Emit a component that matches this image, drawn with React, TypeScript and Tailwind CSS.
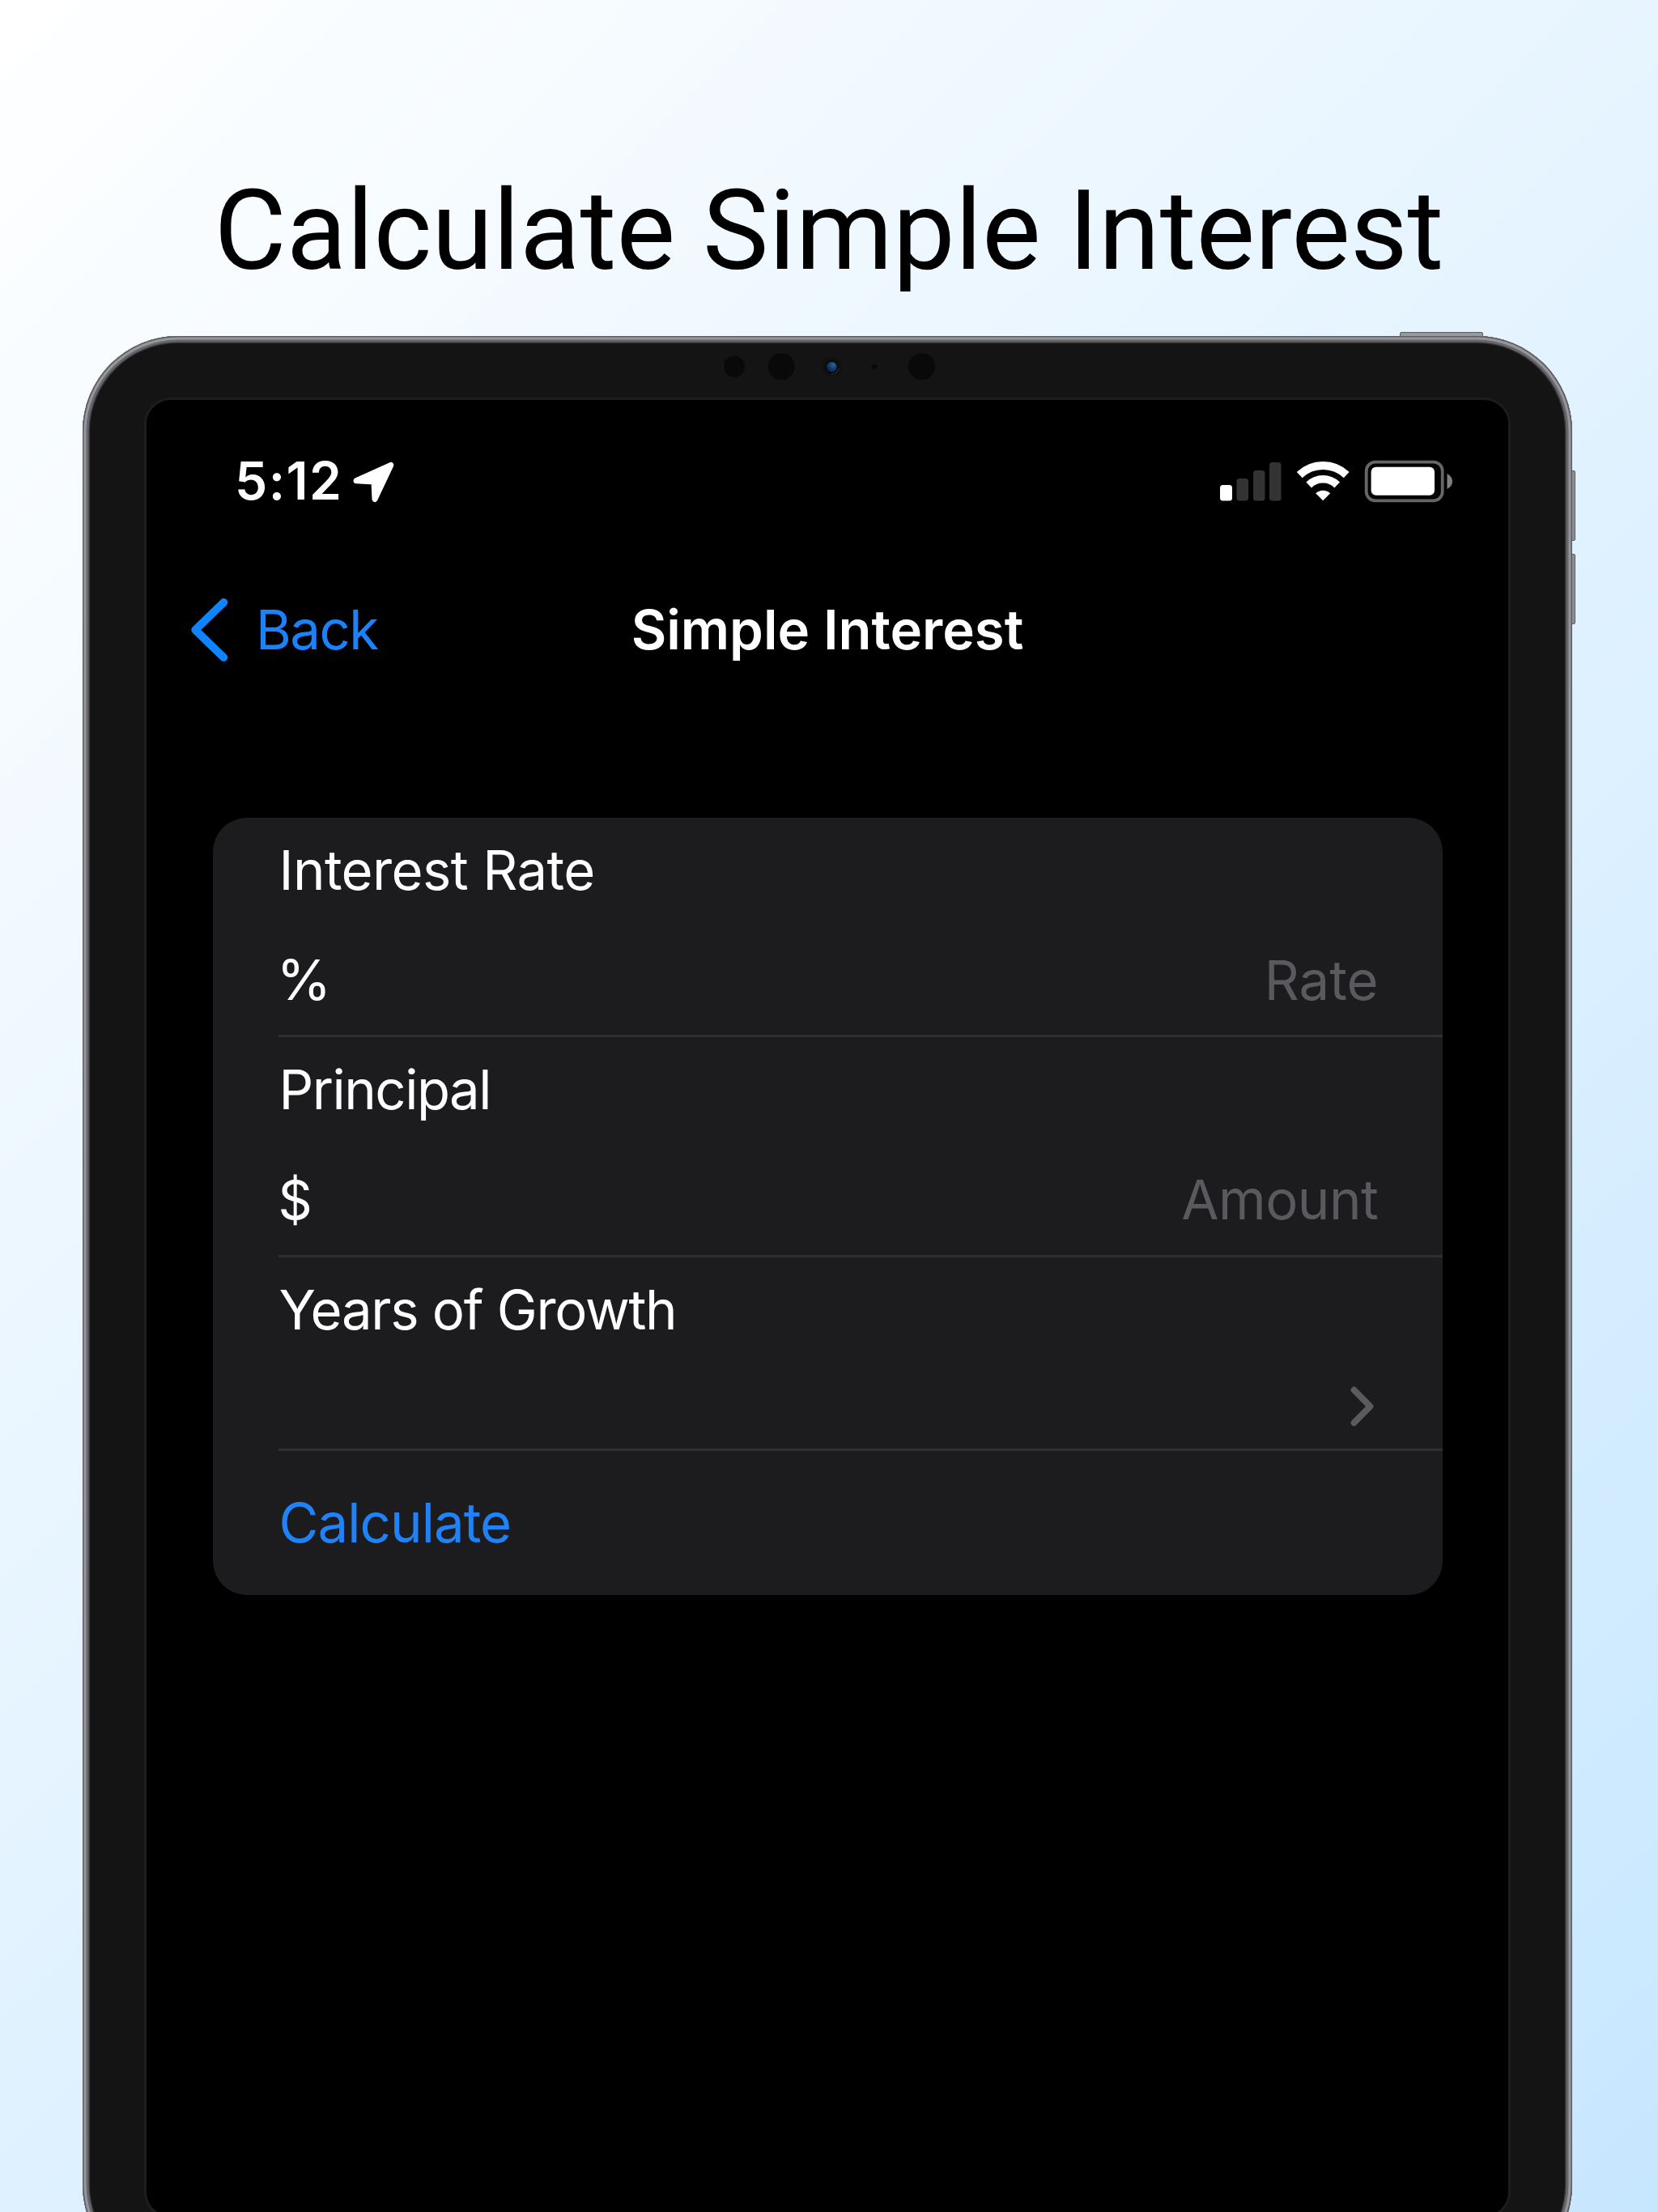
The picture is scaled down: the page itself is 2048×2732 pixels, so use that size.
import React from "react";

function SignalIcon() {
  return (
    <svg className="block h-[56px] w-[78px]" viewBox="1506 566 78 56">
      <rect x="1507" y="599" width="15" height="19.5" rx="3.5" fill="#fff" />
      <rect x="1527.5" y="591" width="14.5" height="27.5" rx="3.5" fill="#333" />
      <rect x="1548" y="581" width="14.5" height="37.5" rx="3.5" fill="#333" />
      <rect x="1568" y="571" width="14.5" height="47.5" rx="3.5" fill="#333" />
    </svg>
  );
}

function WifiIcon() {
  return (
    <svg className="block h-[56px] w-[68px]" viewBox="1600 566 68 56">
      <g fill="none" stroke="#fff">
        <path d="M1605.2 586.6 A42 42 0 0 1 1663.2 586.6" strokeWidth="10" />
        <path d="M1616.7 599 A25 25 0 0 1 1651.7 599" strokeWidth="9.5" />
      </g>
      <path d="M1634.2 618.3 L1625.2 609.3 A13 13 0 0 1 1643.2 609.3 Z" fill="#fff" />
    </svg>
  );
}

function BatteryIcon() {
  return (
    <svg className="block h-[56px] w-[110px]" viewBox="1685 566 110 56">
      <rect x="1687.7" y="570.7" width="94" height="47.6" rx="11" fill="none" stroke="#666" strokeWidth="3.8" />
      <rect x="1693.6" y="576.8" width="78.4" height="35" rx="6" fill="#fff" />
      <path d="M1787.5 585 C1792 587.5 1794 591 1794 594.5 C1794 598 1792 601.500 1787.500 604 Z" fill="#808080" />
    </svg>
  );
}

function LocationIcon() {
  return (
    <svg className="block h-[56px] w-[56px]" viewBox="434 566 56 56">
      <path
        d="M440 593.800 L482.800 574.500 L463 616.500 L462 595 Z"
        fill="#fff"
        stroke="#fff"
        strokeWidth="7"
        strokeLinejoin="round"
      />
    </svg>
  );
}

function SensorBar() {
  return (
    <svg className="block h-[40px] w-[280px]" viewBox="890 433 280 40">
      <defs>
        <radialGradient id="lens" cx="0.65" cy="0.3" r="0.8">
          <stop offset="0" stopColor="#2a62a0" />
          <stop offset="0.4" stopColor="#1a4176" />
          <stop offset="1" stopColor="#0a1630" />
        </radialGradient>
      </defs>
      <circle cx="907" cy="452.700" r="13" fill="#090909" />
      <circle cx="965.300" cy="452.700" r="16.500" fill="#090909" />
      <circle cx="1027" cy="453" r="12" fill="#101010" />
      <path d="M1036 455 A10 10 0 0 1 1027 462" fill="none" stroke="#262626" strokeWidth="2" />
      <circle cx="1027.300" cy="453.300" r="8" fill="#050608" />
      <circle cx="1027.300" cy="453.300" r="6.500" fill="url(#lens)" />
      <circle cx="1080.200" cy="452.700" r="3.300" fill="#090909" />
      <circle cx="1138.500" cy="452.700" r="16.500" fill="#090909" />
    </svg>
  );
}

function StatusBar() {
  return (
    <div className="mt-[72px] flex h-[56px] items-center pr-[68px] pl-[109px]">
      <span className="w-[144px] text-[64px] leading-[56px] font-semibold tracking-[1.4px]">5:12</span>
      <LocationIcon />
      <div className="ml-auto flex items-center">
        <SignalIcon />
        <span className="w-[16px]" />
        <WifiIcon />
        <span className="w-[17px]" />
        <BatteryIcon />
      </div>
    </div>
  );
}

function NavBar() {
  return (
    <div className="mt-[106px] grid h-[100px] grid-cols-[1fr_auto_1fr] items-center text-[67px] leading-[100px]">
      <div className="flex items-center pl-[51px] text-[#1a82fb]">
        <svg className="block h-[84px] w-[54px]" viewBox="232 736 54 84">
          <path d="M276.300 744 L241.200 778 L276.300 812" fill="none" stroke="#0f84ff" strokeWidth="9.800" strokeLinecap="round" strokeLinejoin="round" />
        </svg>
        <span className="ml-[30px] tracking-[-1.5px]">Back</span>
      </div>
      <h2 className="font-semibold">Simple Interest</h2>
      <div />
    </div>
  );
}

function InterestForm() {
  return (
    <div className="mx-[81.500px] mt-[181.500px] h-[960px] rounded-[42px] bg-[#1c1c1e] text-[67px]">
      <div className="ml-[81px] h-[271.500px] border-b-[3px] border-[#2f2f32] pr-[79px]">
        <div className="h-[136px] pl-px leading-[129px] tracking-[-0.6px]">Interest Rate</div>
        <div className="flex h-[136px] justify-between leading-[129px]">
          <span className="-ml-[2px] text-[69px]">%</span>
          <span className="text-[#5a5a5e]">Rate</span>
        </div>
      </div>
      <div className="ml-[81px] h-[271.500px] border-b-[3px] border-[#2f2f32] pr-[79px]">
        <div className="h-[136px] pl-px leading-[130px] tracking-[-1.5px]">Principal</div>
        <div className="flex h-[136px] justify-between leading-[130px]">
          <span className="text-[66px]">$</span>
          <span className="tracking-[-0.5px] text-[#5a5a5e]">Amount</span>
        </div>
      </div>
      <div className="ml-[81px] h-[239.500px] border-b-[3px] border-[#2f2f32] pr-[79px]">
        <div className="h-[136px] pl-px leading-[130px] tracking-[-1.300px]">Years of Growth</div>
        <div className="flex h-[100px] justify-end">
          <svg className="mt-[20px] mr-[2px] block h-[56px] w-[36px]" viewBox="1664 1709 36 56">
            <path d="M1671.500 1716.700 L1691.500 1737 L1671.500 1757.300" fill="none" stroke="#5b5b5f" strokeWidth="7.800" strokeLinecap="round" strokeLinejoin="round" />
          </svg>
        </div>
      </div>
      <div className="pl-[82px] leading-[178px] tracking-[-0.900px] text-[#1f83f7]">Calculate</div>
    </div>
  );
}

export default function App() {
  return (
    <div className="h-[2732px] w-[2048px] overflow-hidden bg-[linear-gradient(135deg,#ffffff_0%,#c7e7ff_100%)]">
      <h1 className="h-[415px] pt-[205px] text-center font-['Roboto',sans-serif] text-[137px] leading-[160px] text-black">
        Calculate Simple Interest
      </h1>
      <div className="relative ml-[102px] h-[2401px] w-[1840px]">
        <div className="absolute top-[-5px] left-[1627px] h-[6px] w-[103px] rounded-t-[2px] border border-[#5c5e61] bg-[#96999d]" />
        <div className="absolute top-[166px] left-[1839px] h-[87px] w-[5px] rounded-r-[2px] border border-[#5c5e61] bg-[#8d8e93]" />
        <div className="absolute top-[269px] left-[1839px] h-[87px] w-[5px] rounded-r-[2px] border border-[#5c5e61] bg-[#8d8e93]" />
        <div className="relative h-full rounded-[118px] bg-[#141414] px-[76px] pt-[76px] pb-[76px] shadow-[inset_0_0_0_1.500px_#5d5e62,inset_0_0_0_4.500px_#96979d,inset_0_0_0_7.500px_#66666b,inset_0_0_0_9px_#39393b]">
          <div className="absolute top-[18px] left-[788px]">
            <SensorBar />
          </div>
          <div className="h-full overflow-hidden rounded-[33px] border-[3px] border-[#1a1e1d] bg-black font-['Inter',sans-serif] text-white">
            <StatusBar />
            <NavBar />
            <InterestForm />
          </div>
        </div>
      </div>
    </div>
  );
}
